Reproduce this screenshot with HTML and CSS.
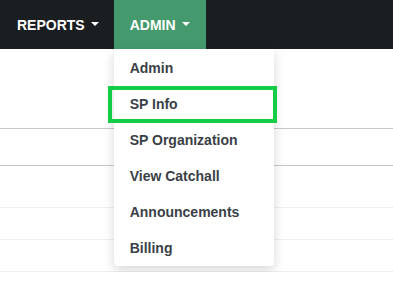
FILE: index.html
```html
<!DOCTYPE html>
<html lang="en">
<head>
    <meta charset="UTF-8">
    <meta name="viewport" content="width=device-width, initial-scale=1.0">
    <title>Admin Menu</title>
    <link rel="stylesheet" href="styles.css">
</head>
<body>

    <nav class="topbar">
        <div class="tab">REPORTS <span class="caret"></span></div>
        <div class="tab active">
            ADMIN <span class="caret"></span>
            <ul class="dropdown">
                <li>Admin</li>
                <li class="selected">SP Info</li>
                <li>SP Organization</li>
                <li>View Catchall</li>
                <li>Announcements</li>
                <li>Billing</li>
            </ul>
        </div>
    </nav>

    <!-- Page content behind the menu -->
    <div class="content">
        <div class="row head"></div>
        <div class="row tall"></div>
        <div class="row"></div>
        <div class="row"></div>
    </div>

</body>
</html>
```

FILE: styles.css
```css
body {
    font-family: "Liberation Sans", Arial, sans-serif;
    margin: 0;
    padding: 0;
    background-color: #fff;
}

.topbar {
    display: flex;
    height: 49px;
    padding-left: 1px;
    background-color: #1b1e21;
}

.tab {
    position: relative;
    display: flex;
    align-items: center;
    gap: 6px;
    padding: 0 16px 0 16px;
    color: #fff;
    font-size: 14px;
    font-weight: bold;
}

.tab:first-child {
    padding-right: 15px;
}

.tab.active {
    background-color: #459a6d;
}

.caret {
    width: 0;
    height: 0;
    border-left: 4px solid transparent;
    border-right: 4px solid transparent;
    border-top: 4px solid #fff;
    margin-top: -1px;
}

/* Dropdown under ADMIN */
.dropdown {
    position: absolute;
    top: 49px;
    left: 0;
    width: 160px;
    margin: 0;
    padding: 1px 0 0;
    list-style: none;
    background: #fff;
    border-radius: 0 0 4px 4px;
    box-shadow: 0px 4px 12px rgba(0, 0, 0, 0.16);
    z-index: 10;
}

.dropdown li {
    position: relative;
    height: 36px;
    line-height: 36px;
    padding-left: 16px;
    color: #3a3f47;
    font-size: 14px;
    font-weight: bold;
}

.dropdown li.selected::after {
    content: "";
    position: absolute;
    top: 0;
    left: -6px;
    right: -3px;
    bottom: -1px;
    border: 4px solid #14cd47;
}

.content {
    padding-top: 79px;
}

.row {
    height: 31px;
    border-top: 1px solid #efefef;
}

.row.head {
    height: 36px;
    border-top: 1px solid #c8c8c8;
}

.row.tall {
    height: 41px;
    border-top: 1px solid #c8c8c8;
}

.row:last-child {
    border-bottom: 1px solid #efefef;
}
```
